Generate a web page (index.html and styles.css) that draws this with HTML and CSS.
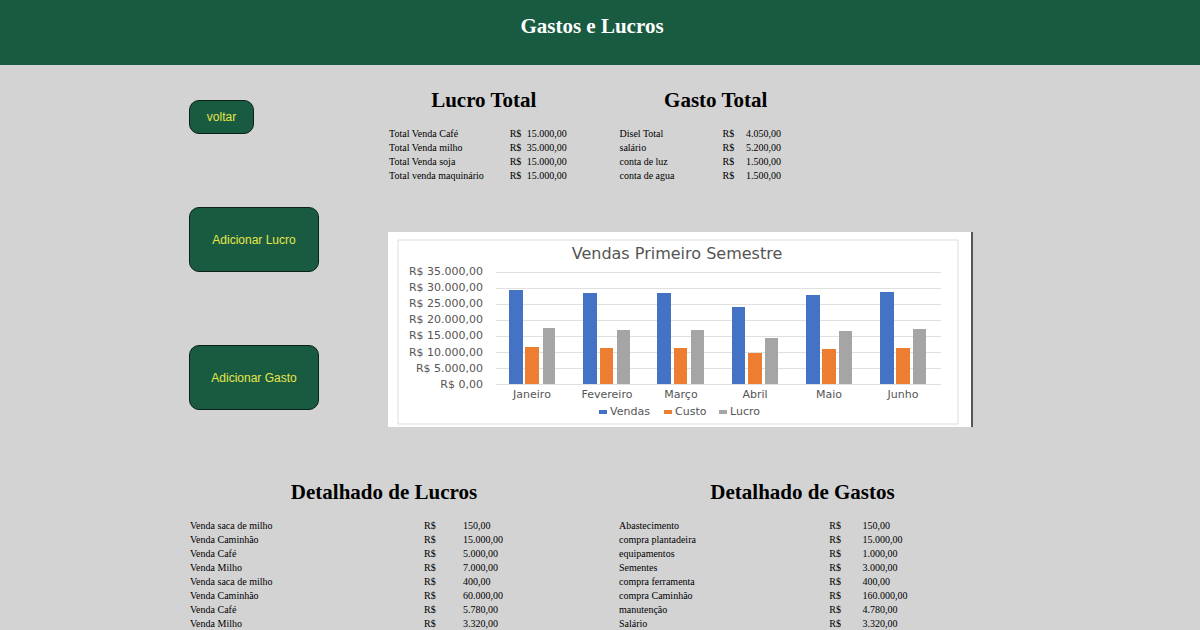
FILE: index.html
```html
<!DOCTYPE html>
<html lang="pt-BR">
<head>
<meta charset="utf-8">
<meta name="viewport" content="width=device-width, initial-scale=1">
<title>Gastos e Lucros</title>
<link rel="stylesheet" href="styles.css">
</head>
<body>
<header class="topbar"><h1 class="title">Gastos e Lucros</h1></header>
<main class="page">
  <section class="overview">
    <nav class="actions">
      <button class="btn btn-back" type="button">voltar</button>
      <button class="btn btn-large" type="button">Adicionar Lucro</button>
      <button class="btn btn-large" type="button">Adicionar Gasto</button>
    </nav>
    <div class="summary">
      <div class="totals">
        <section>
          <h2 class="heading">Lucro Total</h2>
          <table class="list list-profit">
            <tr><td class="name">Total Venda Café</td><td class="currency">R$</td><td>15.000,00</td></tr>
            <tr><td>Total Venda milho</td><td>R$</td><td>35.000,00</td></tr>
            <tr><td>Total Venda soja</td><td>R$</td><td>15.000,00</td></tr>
            <tr><td>Total venda maquinário</td><td>R$</td><td>15.000,00</td></tr>
          </table>
        </section>
        <section>
          <h2 class="heading">Gasto Total</h2>
          <table class="list list-expense">
            <tr><td class="name">Disel Total</td><td class="currency">R$</td><td>4.050,00</td></tr>
            <tr><td>salário</td><td>R$</td><td>5.200,00</td></tr>
            <tr><td>conta de luz</td><td>R$</td><td>1.500,00</td></tr>
            <tr><td>conta de agua</td><td>R$</td><td>1.500,00</td></tr>
          </table>
        </section>
      </div>
      <svg class="chart" viewBox="0 0 585 195" role="img" aria-label="Vendas Primeiro Semestre">
        <rect class="paper" width="585" height="195"/>
        <rect class="edge" x="583" width="2" height="195"/>
        <rect class="frame" x="10" y="8" width="560" height="184"/>
        <text class="chart-title" x="289" y="27">Vendas Primeiro Semestre</text>
        <path class="grid" d="M108 40H553M108 56H553M108 72H553M108 88H553M108 104H553M108 120H553M108 136H553M108 152H553"/>
        <g class="scale">
          <text x="95" y="43">R$ 35.000,00</text>
          <text x="95" y="59">R$ 30.000,00</text>
          <text x="95" y="75">R$ 25.000,00</text>
          <text x="95" y="91">R$ 20.000,00</text>
          <text x="95" y="107">R$ 15.000,00</text>
          <text x="95" y="124">R$ 10.000,00</text>
          <text x="95" y="140">R$ 5.000,00</text>
          <text x="95" y="156">R$ 0,00</text>
        </g>
        <path class="sales" d="M121 58h14v94h-14zM195 61h14v91h-14zM269 61h14v91h-14zM344 75h13v77h-13zM418 63h14v89h-14zM492 60h14v92h-14z"/>
        <path class="cost" d="M137 115h14v37h-14zM212 116h13v36h-13zM286 116h13v36h-13zM360 121h14v31h-14zM434 117h14v35h-14zM508 116h14v36h-14z"/>
        <path class="profit" d="M155 96h12v56h-12zM229 98h13v54h-13zM303 98h13v54h-13zM377 106h13v46h-13zM451 99h13v53h-13zM525 97h13v55h-13z"/>
        <g class="months">
          <text x="144" y="166">Janeiro</text>
          <text x="219" y="166">Fevereiro</text>
          <text x="293" y="166">Março</text>
          <text x="367" y="166">Abril</text>
          <text x="441" y="166">Maio</text>
          <text x="515" y="166">Junho</text>
        </g>
        <rect class="sales" x="211" y="178" width="8" height="4"/>
        <rect class="cost" x="276" y="178" width="8" height="4"/>
        <rect class="profit" x="331" y="178" width="8" height="4"/>
        <g class="legend">
          <text x="222" y="183">Vendas</text>
          <text x="287" y="183">Custo</text>
          <text x="342" y="183">Lucro</text>
        </g>
      </svg>
    </div>
  </section>
  <div class="details">
    <section>
      <h2 class="heading">Detalhado de Lucros</h2>
      <table class="list list-profit-detail">
        <tr><td class="name">Venda saca de milho</td><td class="currency">R$</td><td>150,00</td></tr>
        <tr><td>Venda Caminhão</td><td>R$</td><td>15.000,00</td></tr>
        <tr><td>Venda Café</td><td>R$</td><td>5.000,00</td></tr>
        <tr><td>Venda Milho</td><td>R$</td><td>7.000,00</td></tr>
        <tr><td>Venda saca de milho</td><td>R$</td><td>400,00</td></tr>
        <tr><td>Venda Caminhão</td><td>R$</td><td>60.000,00</td></tr>
        <tr><td>Venda Café</td><td>R$</td><td>5.780,00</td></tr>
        <tr><td>Venda Milho</td><td>R$</td><td>3.320,00</td></tr>
      </table>
    </section>
    <section>
      <h2 class="heading">Detalhado de Gastos</h2>
      <table class="list list-expense-detail">
        <tr><td class="name">Abastecimento</td><td class="currency">R$</td><td>150,00</td></tr>
        <tr><td>compra plantadeira</td><td>R$</td><td>15.000,00</td></tr>
        <tr><td>equipamentos</td><td>R$</td><td>1.000,00</td></tr>
        <tr><td>Sementes</td><td>R$</td><td>3.000,00</td></tr>
        <tr><td>compra ferramenta</td><td>R$</td><td>400,00</td></tr>
        <tr><td>compra Caminhão</td><td>R$</td><td>160.000,00</td></tr>
        <tr><td>manutenção</td><td>R$</td><td>4.780,00</td></tr>
        <tr><td>Salário</td><td>R$</td><td>3.320,00</td></tr>
      </table>
    </section>
  </div>
</main>
</body>
</html>
```
FILE: styles.css
```css
* { box-sizing: border-box; }
body {
  margin: 0;
  background: #d3d3d3;
  color: #000;
  font-family: "Liberation Serif", "Times New Roman", serif;
}
.topbar {
  padding: 14px 16px 27px 0;
  background: #185b41;
  color: #fff;
  text-align: center;
}
.title { margin: 0; font-size: 21px; line-height: 24px; }
.page { padding: 23px 213px 0 189px; }
.overview {
  display: grid;
  grid-template-columns: 130px minmax(0, 1fr);
  gap: 69px;
  margin-right: 14px;
}
.actions {
  display: flex;
  flex-direction: column;
  align-items: flex-start;
  gap: 73px;
  padding-top: 12px;
}
.btn {
  border: 1px solid #0b2118;
  border-radius: 10px;
  background: #185b41;
  color: #e8e64a;
  font-family: "Liberation Sans", Arial, sans-serif;
  font-size: 12px;
  cursor: pointer;
}
.btn-back { width: 65px; height: 34px; }
.btn-large { width: 130px; height: 65px; }
.totals {
  display: grid;
  grid-template-columns: 191fr 194fr;
  gap: 39px;
  margin-right: 160px;
}
.heading {
  margin: 0 0 15px;
  font-size: 21px;
  line-height: 24px;
  text-align: center;
}
.list {
  width: 100%;
  border-collapse: collapse;
  table-layout: fixed;
  font-size: 10px;
  line-height: 14px;
}
.list td { padding: 0 0 0 1px; white-space: nowrap; }
.list-profit .name { width: 63%; }
.list-profit .currency { width: 9%; }
.list-expense .name { width: 53%; }
.list-expense .currency { width: 12%; }
.list-profit-detail .name { width: 60%; }
.list-profit-detail .currency { width: 10%; }
.list-expense-detail .name { width: 57%; }
.list-expense-detail .currency { width: 9%; }
.chart {
  display: block;
  width: 100%;
  margin-top: 49px;
  font-family: "DejaVu Sans", sans-serif;
  font-size: 11px;
  fill: #555;
}
.paper { fill: #fff; }
.edge { fill: #555; }
.frame { fill: none; stroke: #ddd; }
.grid { stroke: #e0e0e0; fill: none; shape-rendering: crispEdges; }
.chart-title { font-size: 16px; text-anchor: middle; }
.scale { text-anchor: end; }
.months { text-anchor: middle; }
.sales { fill: #4472c4; }
.cost { fill: #ed7d31; }
.profit { fill: #a5a5a5; }
.details {
  display: grid;
  grid-template-columns: 390fr 369fr;
  gap: 39px;
  margin-top: 53px;
}
```
